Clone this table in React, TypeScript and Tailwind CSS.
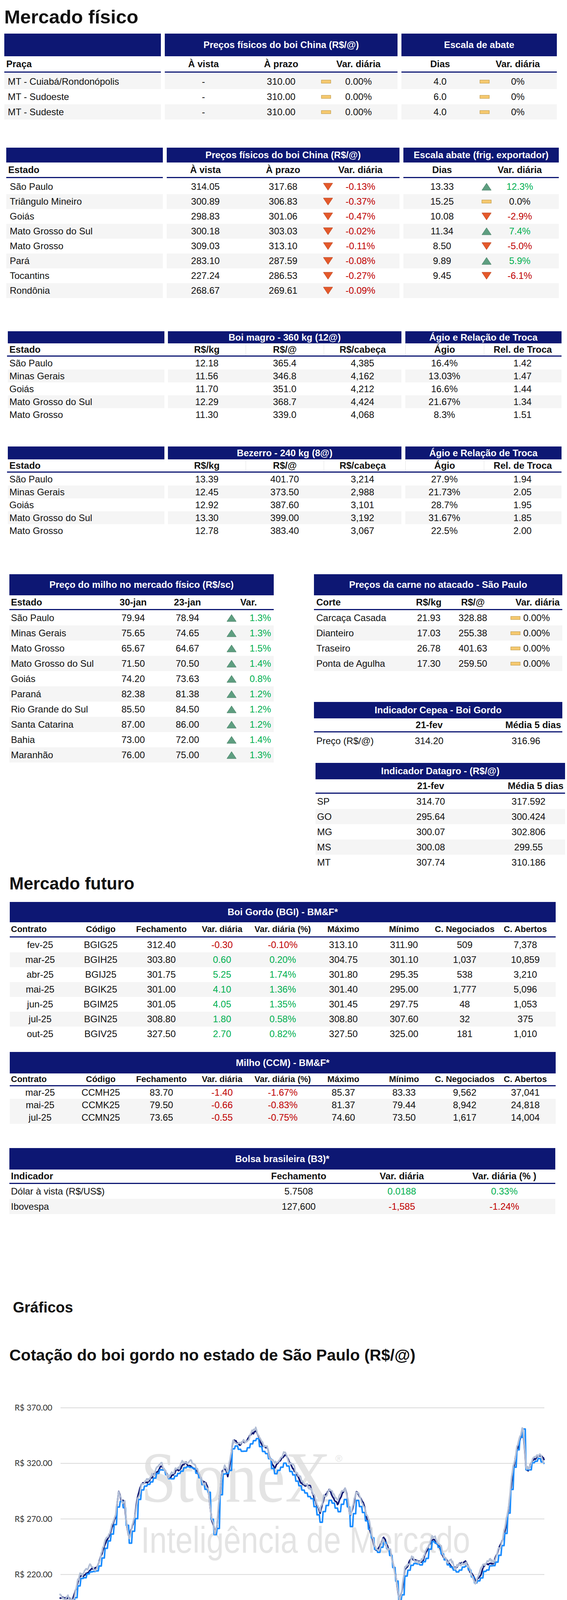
import React from "react";

type P = [number, number];
type Ic = "u" | "d" | "f" | "";

function mulberry32(a: number) {
  return function () {
    a |= 0;
    a = (a + 0x6d2b79f5) | 0;
    let t = Math.imul(a ^ (a >>> 15), 1 | a);
    t = (t + Math.imul(t ^ (t >>> 7), 61 | t)) ^ t;
    return ((t ^ (t >>> 14)) >>> 0) / 4294967296;
  };
}

function lerp(keys: P[], x: number) {
  if (x <= keys[0][0]) return keys[0][1];
  for (let i = 1; i < keys.length; i++) {
    if (x <= keys[i][0]) {
      const [x0, y0] = keys[i - 1];
      const [x1, y1] = keys[i];
      return y0 + ((y1 - y0) * (x - x0)) / (x1 - x0);
    }
  }
  return keys[keys.length - 1][1];
}

const pts = (a: P[]) => a.map(([x, y]) => `${x.toFixed(1)},${y.toFixed(1)}`).join(" ");

function smooth(p: P[]) {
  let d = `M${p[0][0]},${p[0][1]}`;
  for (let i = 0; i < p.length - 1; i++) {
    const p0 = p[i - 1] || p[i];
    const p1 = p[i];
    const p2 = p[i + 1];
    const p3 = p[i + 2] || p2;
    const c1x = p1[0] + (p2[0] - p0[0]) / 6;
    const c1y = p1[1] + (p2[1] - p0[1]) / 6;
    const c2x = p2[0] - (p3[0] - p1[0]) / 6;
    const c2y = p2[1] - (p3[1] - p1[1]) / 6;
    d += ` C${c1x},${c1y} ${c2x},${c2y} ${p2[0]},${p2[1]}`;
  }
  return d;
}

const MES = ["jan", "fev", "mar", "abr", "mai", "jun", "jul", "ago", "set", "out", "nov", "dez"];

function Icon({ k }: { k: Ic }) {
  if (k === "u")
    return (
      <svg width="26" height="20" viewBox="0 0 26 20">
        <polygon points="13,1 25,19 1,19" fill="#5e9e80" stroke="#467f65" strokeWidth="1" />
      </svg>
    );
  if (k === "d")
    return (
      <svg width="26" height="20" viewBox="0 0 26 20">
        <polygon points="1,1 25,1 13,19" fill="#e4592b" stroke="#b9431f" strokeWidth="1" />
      </svg>
    );
  if (k === "f")
    return (
      <svg width="26" height="10" viewBox="0 0 26 10">
        <rect x="1" y="1" width="24" height="8" fill="#f6c96f" stroke="#b8913c" strokeWidth="1" />
      </svg>
    );
  return null;
}

const tone = (k: Ic) => (k === "d" ? "text-[#c00000]" : k === "u" ? "text-[#00b050]" : "");
const sign = (v: string) => (v.startsWith("-") ? "text-[#c00000]" : "text-[#00b050]");

// ---------- tables ----------

function ChinaTable({
  first,
  right,
  rows,
  greyOdd,
  tall,
}: {
  first: string;
  right: string;
  rows: string[][];
  greyOdd: boolean;
  tall: boolean;
}) {
  const band = tall ? "h-[58px]" : "h-[38px]";
  const sub = tall ? "h-[42px]" : "h-[40px]";
  const rh = tall ? "h-[39px]" : "h-[38px]";
  const g = (i: number) => ((i % 2 === 1) === greyOdd ? "bg-[#f5f5f5]" : "");
  return (
    <div className="flex gap-[10px]">
      <div className="w-[401px]">
        <div className={`${band} bg-[#0d1773]`} />
        <div className={`${sub} flex items-center border-b-[3px] border-[#0d1773] pl-[5px] font-bold`}>{first}</div>
        <div className="pt-[3px]">
          {rows.map((r, i) => (
            <div key={i} className={`${rh} flex items-center pl-[9px] ${g(i)}`}>
              {r[0]}
            </div>
          ))}
        </div>
      </div>
      <div className="w-[596px]">
        <div className={`${band} flex items-center justify-center bg-[#0d1773] font-bold text-white`}>
          Preços físicos do boi China (R$/@)
        </div>
        <div className={`${sub} grid grid-cols-[198px_200px_30px_136px_1fr] items-center border-b-[3px] border-[#0d1773] text-center font-bold`}>
          <div>À vista</div>
          <div>À prazo</div>
          <div />
          <div>Var. diária</div>
        </div>
        <div className="pt-[3px]">
          {rows.map((r, i) => (
            <div key={i} className={`${rh} grid grid-cols-[198px_200px_30px_136px_1fr] items-center text-center ${g(i)}`}>
              <div>{r[1]}</div>
              <div>{r[2]}</div>
              <div className="flex justify-center">
                <Icon k={r[3] as Ic} />
              </div>
              <div className={tone(r[3] as Ic)}>{r[4]}</div>
            </div>
          ))}
        </div>
      </div>
      <div className="w-[398px]">
        <div className={`${band} flex items-center justify-center bg-[#0d1773] font-bold text-white`}>{right}</div>
        <div className={`${sub} grid grid-cols-[198px_30px_140px_1fr] items-center border-b-[3px] border-[#0d1773] text-center font-bold`}>
          <div>Dias</div>
          <div />
          <div>Var. diária</div>
        </div>
        <div className="pt-[3px]">
          {rows.map((r, i) => (
            <div key={i} className={`${rh} grid grid-cols-[198px_30px_140px_1fr] items-center text-center ${g(i)}`}>
              <div>{r[5]}</div>
              <div className="flex justify-center">
                <Icon k={r[6] as Ic} />
              </div>
              <div className={tone(r[6] as Ic)}>{r[7]}</div>
            </div>
          ))}
        </div>
      </div>
    </div>
  );
}

function MagroTable({ title, rows, tallBand }: { title: string; rows: string[][]; tallBand: boolean }) {
  const band = tallBand ? "h-[33px]" : "h-[31px]";
  return (
    <div className="w-[1420px]">
      <div className="flex">
        <div className={`${band} ml-[2px] w-[401px] bg-[#0d1773]`} />
        <div className={`${band} ml-[9px] flex w-[598px] items-center justify-center bg-[#0d1773] font-bold text-white`}>{title}</div>
        <div className={`${band} ml-[10px] flex w-[400px] items-center justify-center bg-[#0d1773] font-bold text-white`}>
          Ágio e Relação de Troca
        </div>
      </div>
      <div className="flex h-[34px] border-b-[3px] border-[#0d1773] font-bold">
        <div className="ml-[2px] flex w-[401px] items-center pl-[4px]">Estado</div>
        <div className="ml-[9px] grid w-[598px] grid-cols-3 text-center">
          <div className="flex items-center justify-center">R$/kg</div>
          <div className="flex items-center justify-center border-l border-[#e3e3e3]">R$/@</div>
          <div className="flex items-center justify-center border-l border-[#e3e3e3]">R$/cabeça</div>
        </div>
        <div className="ml-[10px] grid w-[400px] grid-cols-2 border-l border-[#e3e3e3] text-center">
          <div className="flex items-center justify-center">Ágio</div>
          <div className="flex items-center justify-center border-l border-[#e3e3e3]">Rel. de Troca</div>
        </div>
      </div>
      {rows.map((r, i) => {
        const g = i % 2 === 1 ? "bg-[#f5f5f5]" : "";
        return (
          <div key={i} className="flex h-[33px]">
            <div className={`ml-[2px] flex w-[401px] items-center pl-[4px] ${g}`}>{r[0]}</div>
            <div className={`ml-[9px] grid w-[598px] grid-cols-3 items-center text-center ${g}`}>
              <div>{r[1]}</div>
              <div>{r[2]}</div>
              <div>{r[3]}</div>
            </div>
            <div className={`ml-[10px] grid w-[400px] grid-cols-2 items-center text-center ${g}`}>
              <div>{r[4]}</div>
              <div>{r[5]}</div>
            </div>
          </div>
        );
      })}
    </div>
  );
}

const MILHO = [
  ["São Paulo", "79.94", "78.94", "1.3%"],
  ["Minas Gerais", "75.65", "74.65", "1.3%"],
  ["Mato Grosso", "65.67", "64.67", "1.5%"],
  ["Mato Grosso do Sul", "71.50", "70.50", "1.4%"],
  ["Goiás", "74.20", "73.63", "0.8%"],
  ["Paraná", "82.38", "81.38", "1.2%"],
  ["Rio Grande do Sul", "85.50", "84.50", "1.2%"],
  ["Santa Catarina", "87.00", "86.00", "1.2%"],
  ["Bahia", "73.00", "72.00", "1.4%"],
  ["Maranhão", "76.00", "75.00", "1.3%"],
];

const CARNE = [
  ["Carcaça Casada", "21.93", "328.88", "0.00%"],
  ["Dianteiro", "17.03", "255.38", "0.00%"],
  ["Traseiro", "26.78", "401.63", "0.00%"],
  ["Ponta de Agulha", "17.30", "259.50", "0.00%"],
];

const DATAGRO = [
  ["SP", "314.70", "317.592"],
  ["GO", "295.64", "300.424"],
  ["MG", "300.07", "302.806"],
  ["MS", "300.08", "299.55"],
  ["MT", "307.74", "310.186"],
];

const BGI = [
  ["fev-25", "BGIG25", "312.40", "-0.30", "-0.10%", "313.10", "311.90", "509", "7,378"],
  ["mar-25", "BGIH25", "303.80", "0.60", "0.20%", "304.75", "301.10", "1,037", "10,859"],
  ["abr-25", "BGIJ25", "301.75", "5.25", "1.74%", "301.80", "295.35", "538", "3,210"],
  ["mai-25", "BGIK25", "301.00", "4.10", "1.36%", "301.40", "295.00", "1,777", "5,096"],
  ["jun-25", "BGIM25", "301.05", "4.05", "1.35%", "301.45", "297.75", "48", "1,053"],
  ["jul-25", "BGIN25", "308.80", "1.80", "0.58%", "308.80", "307.60", "32", "375"],
  ["out-25", "BGIV25", "327.50", "2.70", "0.82%", "327.50", "325.00", "181", "1,010"],
];

const CCM = [
  ["mar-25", "CCMH25", "83.70", "-1.40", "-1.67%", "85.37", "83.33", "9,562", "37,041"],
  ["mai-25", "CCMK25", "79.50", "-0.66", "-0.83%", "81.37", "79.44", "8,942", "24,818"],
  ["jul-25", "CCMN25", "73.65", "-0.55", "-0.75%", "74.60", "73.50", "1,617", "14,004"],
];

const FUT_HEAD = ["Código", "Fechamento", "Var. diária", "Var. diária (%)", "Máximo", "Mínimo", "C. Negociados", "C. Abertos"];

function Futures({ title, rows, band, sub, rh, grey }: { title: string; rows: string[][]; band: string; sub: string; rh: string; grey: number[] }) {
  return (
    <div className="ml-[25px] w-[1398px]">
      <div className={`${band} flex items-center justify-center bg-[#0d1773] font-bold text-white`}>{title}</div>
      <div className={`${sub} grid grid-cols-9 items-center border-b-[3px] border-[#0d1773] text-[22px] font-bold`}>
        <div className="pl-[3px]">Contrato</div>
        {FUT_HEAD.map((h) => (
          <div key={h} className="whitespace-nowrap text-center">
            {h}
          </div>
        ))}
      </div>
      {rows.map((r, i) => (
        <div key={i} className={`${rh} grid grid-cols-9 items-center text-center ${grey.includes(i) ? "bg-[#f5f5f5]" : ""}`}>
          {r.map((c, j) => (
            <div key={j} className={j === 3 || j === 4 ? sign(c) : ""}>
              {c}
            </div>
          ))}
        </div>
      ))}
    </div>
  );
}

// ---------- charts ----------

function Watermark(props: { x: number; b1: number; w1: number; s1: number; b2: number; w2: number; s2: number; ry: number }) {
  const { x, b1, w1, s1, b2, w2, s2, ry } = props;
  return (
    <g fill="#dcdcdc" opacity="0.75">
      <text x={x} y={b1} fontFamily="'Liberation Serif', serif" fontSize={s1} textLength={w1} lengthAdjust="spacingAndGlyphs">
        StoneX
      </text>
      <text x={x + w1 + 12} y={ry} fontFamily="'Liberation Sans', sans-serif" fontSize={24}>
        ®
      </text>
      <text x={x} y={b2} fontFamily="'Liberation Sans', sans-serif" fontSize={s2} textLength={w2} lengthAdjust="spacingAndGlyphs">
        Inteligência de Mercado
      </text>
    </g>
  );
}

const C1: P[] = [
  [165, 199.5], [185, 198], [200, 196.5], [210, 205], [220, 217], [235, 220], [250, 224], [270, 227], [280, 236], [290, 246],
  [300, 253], [310, 261], [320, 272], [328, 294], [335, 285], [345, 283], [350, 265], [357, 252], [365, 262], [372, 270],
  [380, 288], [390, 299], [400, 302], [410, 304], [420, 307], [432, 313], [445, 317.6], [458, 312], [470, 307], [480, 311],
  [490, 314.7], [503, 317], [515, 320], [528, 318], [540, 314.7], [550, 309], [560, 303], [575, 298.6], [585, 270], [595, 256],
  [600, 262], [605, 282.6], [615, 313], [622, 316], [630, 309], [640, 330], [645, 342], [660, 336.5], [675, 338], [690, 344],
  [700, 346], [708, 349], [720, 339.5], [730, 336], [740, 333.6], [750, 322], [760, 316], [775, 322], [790, 327.8], [800, 321],
  [810, 316], [820, 310], [830, 304.5], [845, 300], [860, 295.7], [872, 285], [885, 275], [895, 288], [910, 295.7], [922, 290],
  [935, 282.6], [945, 292], [955, 298.6], [962, 288], [968, 271], [975, 280], [985, 295.7], [995, 290], [1005, 282.6], [1012, 275],
  [1020, 266.5], [1030, 255], [1040, 242], [1050, 245], [1060, 252], [1070, 246], [1080, 239], [1088, 228], [1095, 217], [1100, 205],
  [1105, 196.5], [1112, 205], [1120, 224], [1130, 230], [1140, 234.5], [1152, 232], [1165, 231.5], [1180, 240], [1195, 252], [1205, 250],
  [1215, 246], [1225, 238], [1235, 231.5], [1248, 228], [1260, 225.7], [1275, 229], [1290, 231.5], [1302, 222], [1315, 214.7], [1328, 220],
  [1340, 227], [1352, 229], [1365, 231.5], [1375, 237], [1385, 246], [1393, 255], [1400, 266.5], [1408, 285], [1415, 304.5], [1422, 320],
  [1430, 333.6], [1438, 344], [1446, 352.6], [1450, 340], [1455, 314.7], [1462, 316], [1475, 325], [1490, 326.4], [1505, 322],
];

// StoneX sits further under Cepea during 2022-2023
const STX_OFF: P[] = [[165, -3], [600, -3], [680, -6], [1000, -8], [1080, -3], [1505, -2]];

function Chart1() {
  const yv = (v: number) => 114 + (370 - v) * 2.845;
  const rand = mulberry32(7);
  const N = 640;
  const cep: P[] = [];
  const stx: P[] = [];
  const b3: P[] = [];
  let n1 = 0;
  let n2 = 0;
  let n3 = 0;
  let hold = 0;
  for (let i = 0; i <= N; i++) {
    const zx = 165 + ((1505 - 165) * i) / N;
    const base = lerp(C1, zx);
    n1 = n1 * 0.8 + (rand() - 0.5) * 2.4;
    n2 = n2 * 0.85 + (rand() - 0.5) * 1.6;
    n3 = n3 * 0.7 + (rand() - 0.5) * 4.2;
    const x = zx / 1.08;
    cep.push([x, yv(base + n1)]);
    if (i % 4 === 0) hold = base + lerp(STX_OFF, zx) + n2;
    stx.push([x, yv(hold)]);
    b3.push([x, yv(base + 1.2 + n3)]);
  }
  const labels = Array.from({ length: 30 }, (_, i) => {
    const k = 3 + 2 * i;
    return `${MES[k % 12]}-${20 + Math.floor(k / 12)}`;
  });
  return (
    <svg width="1452" height="820" className="block" fontFamily="Lato, sans-serif">
      {[370, 320, 270, 220, 170].map((v) => (
        <g key={v}>
          <line x1="155" x2="1394" y1={yv(v)} y2={yv(v)} stroke="#d9d9d9" strokeWidth="2" />
          <text x="134" y={yv(v) + 7} textAnchor="end" fontSize="21" fill="#333333">
            R$ {v}.00
          </text>
        </g>
      ))}
      <Watermark x={361} b1={354} w1={486} s1={185} b2={485} w2={843} s2={95} ry={252} />
      <polyline points={pts(cep)} fill="none" stroke="#0d1773" strokeWidth="4" strokeLinejoin="round" />
      <polyline points={pts(stx)} fill="none" stroke="#1a8cff" strokeWidth="4" strokeLinejoin="round" />
      <polyline points={pts(b3)} fill="none" stroke="#b3bfd6" strokeWidth="4" strokeLinejoin="round" />
      {labels.map((l, i) => {
        const x = 156 + i * 42.4;
        return (
          <g key={l + i}>
            <line x1={x - 2} x2={x - 2} y1="683" y2="693" stroke="#d9d9d9" strokeWidth="2" />
            <text transform={`translate(${x + 8},702) rotate(-90)`} textAnchor="end" fontSize="23" fill="#333333">
              {l}
            </text>
          </g>
        );
      })}
      <g fontSize="22.5" fill="#333333">
        <line x1="428" x2="468" y1="798" y2="798" stroke="#0d1773" strokeWidth="6" />
        <text x="474" y="806">Cepea (média 5 dias)</text>
        <line x1="706" x2="748" y1="798" y2="798" stroke="#1a8cff" strokeWidth="6" />
        <text x="752" y="806">StoneX</text>
        <line x1="852" x2="893" y1="798" y2="798" stroke="#b3bfd6" strokeWidth="6" />
        <text x="898" y="806">B3 contínuo</text>
      </g>
    </svg>
  );
}

function Chart2() {
  const yv = (v: number) => 373 + (310 - v) * 5.5;
  const cx = [370, 770, 1168];
  const s1: P[] = [[370, yv(311.8)], [770, yv(311.6)], [1168, yv(302.4)]];
  const s2: P[] = [[370, yv(312.4)], [770, yv(312.4)], [1168, yv(307.8)]];
  const s3: P[] = [[370, yv(321.3)], [770, yv(321.1)], [1168, yv(319.1)]];
  return (
    <svg width="1452" height="859" className="block" fontFamily="Lato, sans-serif">
      {[370, 350, 330, 310, 290, 270, 250].map((v) => (
        <g key={v}>
          <line x1="170" x2="1368" y1={yv(v)} y2={yv(v)} stroke="#d9d9d9" strokeWidth="2" />
          <text x="148" y={yv(v) + 8} textAnchor="end" fontSize="22" fill="#333333">
            R$ {v}.00
          </text>
        </g>
      ))}
      {[170, 570, 968, 1368].map((x) => (
        <line key={x} x1={x} x2={x} y1={yv(250)} y2={yv(250) + 12} stroke="#d9d9d9" strokeWidth="2" />
      ))}
      {["Feb-25", "Mar-25", "Apr-25"].map((l, i) => (
        <text key={l} x={cx[i]} y="748" textAnchor="middle" fontSize="23" fill="#333333">
          {l}
        </text>
      ))}
      <Watermark x={368} b1={373} w1={475} s1={185} b2={502} w2={812} s2={95} ry={276} />
      <path d={smooth(s3)} fill="none" stroke="#b3bed3" strokeWidth="6" strokeDasharray="12 7" strokeLinecap="round" />
      <path d={smooth(s2)} fill="none" stroke="#1a8cff" strokeWidth="6" strokeDasharray="12 7" strokeLinecap="round" />
      <path d={smooth(s1)} fill="none" stroke="#0f1c6b" strokeWidth="9" />
      {s1.map(([x, y]) => (
        <circle key={x} cx={x} cy={y} r="9" fill="#0f1c6b" />
      ))}
      <g fontSize="23" fill="#333333">
        <line x1="491" x2="553" y1="819" y2="819" stroke="#0f1c6b" strokeWidth="9" />
        <circle cx="520" cy="819" r="9" fill="#0f1c6b" />
        <text x="556" y="827">24-fev</text>
        <line x1="645" x2="704" y1="819" y2="819" stroke="#1a8cff" strokeWidth="6" strokeDasharray="10 6" />
        <text x="708" y="827">17-fev</text>
        <line x1="798" x2="856" y1="819" y2="819" stroke="#b3bed3" strokeWidth="6" strokeDasharray="10 6" />
        <text x="861" y="827">24-jan</text>
      </g>
    </svg>
  );
}

const L3: P[] = [
  [115, 860], [120, 910], [130, 820], [140, 810], [150, 890], [158, 850], [165, 900], [175, 950], [185, 1050], [195, 1180], [205, 1190],
  [215, 1230], [230, 1240], [245, 1290], [255, 1180], [265, 1230], [275, 1070], [285, 840], [295, 880], [305, 710], [320, 750], [330, 690],
  [345, 800], [360, 790], [372, 840], [385, 635], [400, 900], [410, 1090], [418, 940], [430, 1100], [440, 1160], [450, 1040], [460, 880],
  [470, 960], [480, 800], [490, 760], [500, 840], [510, 890], [520, 600], [530, 490], [538, 460], [545, 600], [555, 680], [565, 880],
  [575, 1000], [590, 1130], [598, 1205], [610, 1110], [625, 1090], [635, 960], [645, 740], [655, 830], [665, 760], [675, 880], [685, 1040],
  [695, 920], [710, 960], [720, 820], [730, 850], [740, 770], [750, 690], [760, 870], [775, 930], [790, 920], [805, 980], [820, 1020],
  [835, 930], [850, 950], [865, 920], [880, 990], [895, 860], [910, 830], [925, 860], [940, 960], [955, 930], [965, 1000], [975, 830],
  [985, 800], [995, 700], [1005, 600], [1012, 540], [1018, 265], [1025, 290], [1035, 430], [1045, 560], [1055, 670], [1065, 640],
  [1075, 700], [1085, 850], [1095, 950], [1105, 1030], [1120, 1010], [1135, 1050], [1145, 1000], [1155, 940], [1170, 1050], [1185, 1010],
  [1195, 1070], [1205, 1020], [1215, 1110], [1230, 1130], [1245, 1140], [1258, 1180], [1268, 1260], [1280, 1280], [1290, 1310],
  [1300, 1330], [1310, 1270], [1320, 1290], [1330, 1220], [1340, 1220], [1350, 1180], [1360, 1140], [1368, 810], [1378, 930],
  [1390, 820], [1400, 790], [1408, 900], [1415, 1100], [1425, 1190], [1440, 1160], [1450, 1190], [1460, 1090], [1470, 1020],
  [1478, 990], [1485, 1020], [1500, 1015],
];

const D3: P[] = [
  [115, 960], [120, 1070], [125, 1080], [132, 1020], [140, 1040], [148, 1080], [155, 1050], [165, 1080], [175, 1100], [185, 1140],
  [195, 1210], [210, 1250], [225, 1265], [235, 1310], [245, 1330], [255, 1265], [265, 1310], [272, 1220], [280, 1050], [290, 1020],
  [300, 940], [310, 950], [320, 920], [330, 920], [345, 970], [360, 990], [375, 960], [385, 890], [395, 1010], [405, 1050], [415, 1110],
  [425, 1170], [440, 1210], [450, 1060], [460, 1030], [470, 1000], [480, 970], [490, 1010], [500, 980], [510, 1040], [520, 820],
  [528, 765], [538, 770], [545, 830], [555, 930], [568, 1100], [580, 1210], [592, 1260], [605, 1190], [620, 1170], [632, 1050],
  [642, 960], [652, 1010], [662, 1070], [672, 1000], [682, 1100], [694, 920], [704, 1040], [715, 1050], [725, 890], [735, 910],
  [745, 800], [755, 900], [765, 960], [775, 990], [785, 1020], [792, 880], [800, 990], [810, 1040], [820, 940], [835, 930], [845, 880],
  [855, 790], [865, 890], [875, 940], [885, 910], [895, 950], [905, 850], [915, 960], [925, 1000], [935, 1100], [945, 1000], [958, 1050],
  [968, 870], [978, 880], [988, 820], [1000, 850], [1010, 800], [1018, 640], [1028, 605], [1038, 700], [1048, 760], [1058, 850],
  [1068, 800], [1078, 790], [1085, 900], [1095, 980], [1105, 1020], [1115, 910], [1125, 950], [1140, 990], [1155, 1050], [1168, 980],
  [1178, 950], [1190, 1100], [1200, 1160], [1215, 1180], [1228, 1220], [1245, 1210], [1258, 1240], [1270, 1310], [1282, 1380],
  [1292, 1400], [1302, 1410], [1312, 1350], [1325, 1345], [1340, 1360], [1350, 1270], [1362, 1200], [1372, 1180], [1380, 1090],
  [1390, 970], [1400, 990], [1410, 1150], [1420, 1240], [1435, 1270], [1450, 1280], [1460, 1230], [1470, 1200], [1500, 1197],
];

function Chart3() {
  const yv = (v: number) => 45 + (16 - v) * 54.2;
  const rand = mulberry32(11);
  const mk = (keys: P[], amp: number) => {
    const out: P[] = [];
    for (let zx = 115; zx <= 1500; zx += 3) {
      const zy = lerp(keys, zx);
      const j = zx > 1470 ? 0 : (rand() - 0.5) * amp;
      out.push([zx / 1.08, zy / 2.01 - 37 + j]);
    }
    return out;
  };
  const light = mk(L3, 7);
  const dark = mk(D3, 6);
  const ticks = [105, 156, 204, 253, 303, 354, 403, 454, 505, 556, 606, 657, 708, 759, 810, 861, 907, 958, 1009, 1060, 1111, 1160, 1211, 1261, 1310, 1361];
  return (
    <svg width="1452" height="843" className="block" fontFamily="Lato, sans-serif">
      {[16, 14, 12, 10, 8, 6, 4].map((v) => (
        <g key={v}>
          <line x1="105" x2="1389" y1={yv(v)} y2={yv(v)} stroke="#d9d9d9" strokeWidth="2" />
          <text x="81" y={yv(v) + 8} textAnchor="end" fontSize="23" fill="#333333">
            {v.toFixed(2)}
          </text>
        </g>
      ))}
      <Watermark x={315} b1={371} w1={509} s1={185} b2={499} w2={870} s2={95} ry={270} />
      <polyline points={pts(light)} fill="none" stroke="#00b0f0" strokeWidth="5" strokeLinejoin="round" />
      <polyline points={pts(dark)} fill="none" stroke="#0b2163" strokeWidth="5" strokeLinejoin="round" />
      <line x1="105" x2="1389" y1="460" y2="460" stroke="#262626" strokeWidth="5" strokeDasharray="11 6" />
      {ticks.map((x, i) => (
        <g key={x}>
          <line x1={x} x2={x} y1="695" y2="705" stroke="#d9d9d9" strokeWidth="2" />
          <text transform={`translate(${x + 8},712) rotate(-45)`} textAnchor="end" fontSize="21" fill="#333333">
            {`${MES[i % 12]}-${23 + Math.floor(i / 12)}`}
          </text>
        </g>
      ))}
      <g fontSize="22" fill="#333333" letterSpacing="1">
        <line x1="165" x2="222" y1="814" y2="814" stroke="#00b0f0" strokeWidth="6" />
        <text x="229" y="822">Frigoríficos, exportadores</text>
        <line x1="645" x2="704" y1="814" y2="814" stroke="#0b2163" strokeWidth="6" />
        <text x="709" y="822">Frigoríficos, mercado interno</text>
        <line x1="1156" x2="1208" y1="814" y2="814" stroke="#262626" strokeWidth="5" strokeDasharray="11 6" />
        <text x="1222" y="822">Média</text>
      </g>
    </svg>
  );
}

const BG4: P[] = [
  [126, 1165], [150, 1165], [155, 1175], [165, 1175], [195, 1180], [220, 1188], [260, 1195], [300, 1200], [310, 1215], [330, 1225],
  [350, 1228], [370, 1258], [400, 1250], [420, 1240], [440, 1235], [455, 1215], [500, 1215], [520, 1225], [540, 1250], [560, 1270],
  [570, 1285], [598, 1290], [600, 1310], [650, 1305], [665, 1290], [690, 1285], [720, 1275], [735, 1255], [770, 1250], [800, 1235],
  [820, 1215], [840, 1190], [860, 1170], [880, 1125], [900, 1090], [920, 1060], [940, 1040], [960, 980], [970, 920], [990, 810],
  [1010, 760], [1030, 750], [1040, 720], [1060, 680], [1080, 600], [1100, 560], [1115, 515], [1130, 500], [1150, 478], [1155, 480],
  [1165, 580], [1175, 595], [1180, 690], [1200, 700], [1210, 680], [1230, 670], [1260, 660], [1275, 625], [1290, 620], [1305, 600],
  [1340, 605], [1360, 600], [1375, 640], [1385, 640], [1395, 650],
];

const CC4: P[] = [
  [126, 1195], [130, 1140], [150, 1140], [170, 1135], [178, 1160], [190, 1178], [215, 1178], [220, 1165], [260, 1165], [270, 1155],
  [280, 1160], [285, 1200], [300, 1238], [310, 1220], [320, 1195], [330, 1175], [345, 1160], [355, 1180], [370, 1210], [385, 1210],
  [400, 1190], [415, 1165], [430, 1200], [450, 1205], [470, 1195], [485, 1205], [500, 1180], [520, 1175], [545, 1175], [555, 1235],
  [570, 1255], [595, 1245], [620, 1255], [650, 1255], [670, 1245], [695, 1235], [712, 1200], [740, 1205], [760, 1215], [780, 1225],
  [790, 1225], [795, 1175], [815, 1163], [860, 1160], [880, 1135], [900, 1070], [930, 1065], [945, 1025], [965, 1020], [975, 960],
  [985, 900], [992, 860], [1000, 775], [1008, 700], [1025, 730], [1050, 730], [1060, 720], [1070, 700], [1090, 700], [1095, 660],
  [1110, 660], [1115, 515], [1130, 515], [1140, 510], [1150, 500], [1155, 485], [1170, 500], [1180, 570], [1190, 575], [1200, 625],
  [1235, 625], [1250, 590], [1285, 590], [1290, 555], [1305, 555], [1315, 570], [1325, 570], [1330, 605], [1365, 605], [1372, 588],
  [1392, 588], [1395, 595],
];

const MG4: P[] = [
  [126, 950], [128, 875], [131, 810], [150, 815], [152, 772], [158, 790], [170, 780], [175, 770], [178, 820], [188, 820], [195, 870],
  [215, 875], [218, 825], [222, 810], [240, 810], [260, 800], [263, 775], [272, 775], [280, 875], [290, 935], [298, 965], [305, 945],
  [310, 875], [320, 820], [330, 740], [345, 700], [355, 700], [370, 730], [385, 750], [400, 725], [410, 690], [417, 670], [425, 760],
  [440, 780], [450, 800], [458, 855], [470, 830], [480, 822], [485, 850], [500, 840], [505, 790], [520, 740], [540, 685], [545, 685],
  [555, 825], [570, 800], [600, 795], [602, 705], [625, 705], [640, 745], [660, 755], [675, 770], [690, 760], [700, 780], [710, 720],
  [715, 685], [740, 690], [755, 735], [775, 815], [790, 815], [800, 720], [815, 700], [830, 720], [840, 770], [850, 805], [860, 830],
  [870, 835], [880, 775], [882, 880], [900, 885], [903, 740], [908, 830], [920, 830], [928, 900], [935, 900], [945, 820], [948, 873],
  [960, 880], [975, 960], [985, 1080], [990, 860], [1000, 770], [1010, 630], [1020, 780], [1030, 800], [1040, 860], [1045, 900],
  [1055, 960], [1060, 990], [1070, 990], [1080, 1130], [1090, 1165], [1100, 1130], [1113, 1160], [1115, 880], [1125, 920], [1135, 930],
  [1145, 945], [1155, 870], [1162, 700], [1168, 625], [1178, 740], [1190, 680], [1205, 700], [1215, 745], [1240, 770], [1250, 690],
  [1265, 675], [1275, 770], [1285, 770], [1290, 695], [1300, 740], [1310, 805], [1325, 805], [1330, 900], [1340, 870], [1350, 870],
  [1360, 890], [1370, 825], [1378, 730], [1385, 735], [1395, 730],
];

function Chart4() {
  const cv = (a: P[]): P[] => a.map(([zx, zy]) => [zx / 1.08, zy / 1.406 - 237]);
  const yl = (v: number) => 45 + (24 - v) * 67.7;
  const yr = (m: number) => 45 + (2 - m) * 169.25;
  const area = cv(MG4);
  const zero = yr(0);
  const areaPts: P[] = [[area[0][0], zero], ...area, [area[area.length - 1][0], zero]];
  const ticks = [117, 205, 288, 376, 460, 549, 633, 722, 810, 895, 983, 1069, 1157, 1243];
  const right = ["R$ 2.00", "R$ 1.50", "R$ 1.00", "R$ 0.50", "R$ 0.00", "-R$ 0.50", "-R$ 1.00", "-R$ 1.50", "-R$ 2.00"];
  return (
    <svg width="1452" height="870" className="block" fontFamily="Lato, sans-serif">
      {[24, 23, 22, 21, 20, 19, 18, 17, 16, 15, 14].map((v) => (
        <g key={v}>
          <line x1="117" x2="1293" y1={yl(v)} y2={yl(v)} stroke="#e0e0e0" strokeWidth="2" />
          <text x="11" y={yl(v) + 8} fontSize="21" fill="#333333">
            R$ {v}.00
          </text>
        </g>
      ))}
      {right.map((l, i) => (
        <text key={l} x="1316" y={yr(2 - i * 0.5) + 8} fontSize="21" fill="#333333">
          {l}
        </text>
      ))}
      <polygon points={pts(areaPts)} fill="#b4bfd4" />
      <Watermark x={305} b1={353} w1={482} s1={160} b2={499} w2={801} s2={84} ry={278} />
      <polyline points={pts(cv(BG4))} fill="none" stroke="#1f8ff3" strokeWidth="5" strokeLinejoin="round" />
      <polyline points={pts(cv(CC4))} fill="none" stroke="#0d1a6e" strokeWidth="5" strokeLinejoin="round" />
      {ticks.map((x, i) => (
        <g key={x}>
          <line x1={x} x2={x} y1="722" y2="732" stroke="#d9d9d9" strokeWidth="2" />
          <text transform={`translate(${x + 9},748) rotate(-45)`} textAnchor="end" fontSize="22" fill="#333333">
            {`${MES[i % 12]}-${24 + Math.floor(i / 12)}`}
          </text>
        </g>
      ))}
      <g fontSize="22" fill="#333333">
        <rect x="310" y="835" width="37" height="18" fill="#b4bfd4" />
        <text x="352" y="852">Margem da Indústria (eixo direito)</text>
        <line x1="727" x2="768" y1="844" y2="844" stroke="#1f8ff3" strokeWidth="6" />
        <text x="771" y="852">Boi Gordo</text>
        <line x1="907" x2="952" y1="844" y2="844" stroke="#0d1a6e" strokeWidth="6" />
        <text x="954" y="852">Carcaça Casada</text>
      </g>
    </svg>
  );
}

// ---------- page ----------

export default function App() {
  return (
    <div className="w-[1452px] bg-white font-['Liberation_Sans',Arial,sans-serif] text-[24px] leading-none whitespace-nowrap text-[#111]">
      <h1 className="pt-[19px] pl-[11px] text-[49px] leading-none font-bold">Mercado físico</h1>

      <div className="mt-[18px] ml-[11px]">
        <ChinaTable
          first="Praça"
          right="Escala de abate"
          greyOdd={false}
          tall={true}
          rows={[
            ["MT - Cuiabá/Rondonópolis", "-", "310.00", "f", "0.00%", "4.0", "f", "0%"],
            ["MT - Sudoeste", "-", "310.00", "f", "0.00%", "6.0", "f", "0%"],
            ["MT - Sudeste", "-", "310.00", "f", "0.00%", "4.0", "f", "0%"],
          ]}
        />
      </div>

      <div className="mt-[72px] ml-[16px]">
        <ChinaTable
          first="Estado"
          right="Escala abate (frig. exportador)"
          greyOdd={true}
          tall={false}
          rows={[
            ["São Paulo", "314.05", "317.68", "d", "-0.13%", "13.33", "u", "12.3%"],
            ["Triângulo Mineiro", "300.89", "306.83", "d", "-0.37%", "15.25", "f", "0.0%"],
            ["Goiás", "298.83", "301.06", "d", "-0.47%", "10.08", "d", "-2.9%"],
            ["Mato Grosso do Sul", "300.18", "303.03", "d", "-0.02%", "11.34", "u", "7.4%"],
            ["Mato Grosso", "309.03", "313.10", "d", "-0.11%", "8.50", "d", "-5.0%"],
            ["Pará", "283.10", "287.59", "d", "-0.08%", "9.89", "u", "5.9%"],
            ["Tocantins", "227.24", "286.53", "d", "-0.27%", "9.45", "d", "-6.1%"],
            ["Rondônia", "268.67", "269.61", "d", "-0.09%", "", "", ""],
          ]}
        />
      </div>

      <div className="mt-[85px] ml-[18px]">
        <MagroTable
          title="Boi magro - 360 kg (12@)"
          tallBand={false}
          rows={[
            ["São Paulo", "12.18", "365.4", "4,385", "16.4%", "1.42"],
            ["Minas Gerais", "11.56", "346.8", "4,162", "13.03%", "1.47"],
            ["Goiás", "11.70", "351.0", "4,212", "16.6%", "1.44"],
            ["Mato Grosso do Sul", "12.29", "368.7", "4,424", "21.67%", "1.34"],
            ["Mato Grosso", "11.30", "339.0", "4,068", "8.3%", "1.51"],
          ]}
        />
      </div>

      <div className="mt-[65px] ml-[18px]">
        <MagroTable
          title="Bezerro - 240 kg (8@)"
          tallBand={true}
          rows={[
            ["São Paulo", "13.39", "401.70", "3,214", "27.9%", "1.94"],
            ["Minas Gerais", "12.45", "373.50", "2,988", "21.73%", "2.05"],
            ["Goiás", "12.92", "387.60", "3,101", "28.7%", "1.95"],
            ["Mato Grosso do Sul", "13.30", "399.00", "3,192", "31.67%", "1.85"],
            ["Mato Grosso", "12.78", "383.40", "3,067", "22.5%", "2.00"],
          ]}
        />
      </div>

      <div className="mt-[95px] ml-[24px] flex items-start">
        <div className="w-[677px]">
          <div className="flex h-[54px] items-center justify-center bg-[#0d1773] font-bold text-white">
            Preço do milho no mercado físico (R$/sc)
          </div>
          <div className="grid h-[38px] grid-cols-[270px_94px_184px_129px] items-center border-b-[3px] border-[#0d1773] font-bold">
            <div className="pl-[4px]">Estado</div>
            <div className="text-center">30-jan</div>
            <div className="text-center">23-jan</div>
            <div className="text-center">Var.</div>
          </div>
          {MILHO.map((r, i) => (
            <div key={r[0]} className={`grid h-[39px] grid-cols-[270px_94px_184px_42px_87px] items-center ${i % 2 === 1 ? "bg-[#f5f5f5]" : ""}`}>
              <div className="pl-[4px]">{r[0]}</div>
              <div className="text-center">{r[1]}</div>
              <div className="text-center">{r[2]}</div>
              <div className="flex justify-center">
                <Icon k="u" />
              </div>
              <div className="pr-[7px] text-right text-[#00b050]">{r[3]}</div>
            </div>
          ))}
        </div>

        <div className="ml-[103px] w-[636px]">
          <div className="flex h-[54px] items-center justify-center bg-[#0d1773] font-bold text-white">
            Preços da carne no atacado - São Paulo
          </div>
          <div className="grid h-[38px] grid-cols-[240px_108px_118px_36px_1fr] items-center border-b-[3px] border-[#0d1773] font-bold">
            <div className="pl-[6px]">Corte</div>
            <div className="text-center">R$/kg</div>
            <div className="text-center">R$/@</div>
            <div />
            <div className="pl-[14px]">Var. diária</div>
          </div>
          {CARNE.map((r, i) => (
            <div key={r[0]} className={`grid h-[39px] grid-cols-[240px_108px_118px_36px_28px_1fr] items-center ${i % 2 === 1 ? "bg-[#f5f5f5]" : ""}`}>
              <div className="pl-[6px]">{r[0]}</div>
              <div className="text-center">{r[1]}</div>
              <div className="text-center">{r[2]}</div>
              <div />
              <div className="flex justify-center">
                <Icon k="f" />
              </div>
              <div className="pl-[6px]">{r[3]}</div>
            </div>
          ))}

          <div className="mt-[79px] flex h-[42px] items-center justify-center bg-[#0d1773] font-bold text-white">
            Indicador Cepea - Boi Gordo
          </div>
          <div className="grid h-[36px] grid-cols-[240px_110px_140px_1fr] items-center border-b-[3px] border-[#0d1773] font-bold">
            <div />
            <div className="text-center">21-fev</div>
            <div />
            <div className="pr-[4px] text-right">Média 5 dias</div>
          </div>
          <div className="grid h-[44px] grid-cols-[240px_110px_140px_1fr] items-center">
            <div className="pl-[6px]">Preço (R$/@)</div>
            <div className="text-center">314.20</div>
            <div />
            <div className="pr-[40px] text-center">316.96</div>
          </div>

          <div className="mt-[34px] ml-[4px] w-[639px]">
            <div className="flex h-[42px] items-center justify-center bg-[#0d1773] font-bold text-white">
              Indicador Datagro - (R$/@)
            </div>
            <div className="grid h-[37px] grid-cols-[240px_110px_140px_1fr] items-center border-b-[3px] border-[#0d1773] font-bold">
              <div />
              <div className="text-center">21-fev</div>
              <div />
              <div className="pr-[4px] text-right">Média 5 dias</div>
            </div>
            {DATAGRO.map((r, i) => (
              <div key={r[0]} className={`grid h-[39px] grid-cols-[240px_110px_140px_1fr] items-center ${i % 2 === 1 ? "bg-[#f5f5f5]" : ""}`}>
                <div className="pl-[4px]">{r[0]}</div>
                <div className="text-center">{r[1]}</div>
                <div />
                <div className="pr-[38px] text-center">{r[2]}</div>
              </div>
            ))}
          </div>
        </div>
      </div>

      <h1 className="mt-[13px] pl-[24px] text-[44px] leading-none font-bold">Mercado futuro</h1>

      <div className="mt-[25px]">
        <Futures title="Boi Gordo (BGI) - BM&F*" rows={BGI} band="h-[52px]" sub="h-[39px]" rh="h-[38px]" grey={[1, 3, 5]} />
      </div>
      <div className="mt-[27px]">
        <Futures title="Milho (CCM) - BM&F*" rows={CCM} band="h-[55px]" sub="h-[33px]" rh="h-[32px]" grey={[1, 2]} />
      </div>

      <div className="mt-[62px] ml-[24px] w-[1398px]">
        <div className="flex h-[55px] items-center justify-center bg-[#0d1773] font-bold text-white">Bolsa brasileira (B3)*</div>
        <div className="grid h-[37px] grid-cols-[609px_264px_264px_1fr] items-center border-b-[3px] border-[#0d1773] font-bold">
          <div className="pl-[4px]">Indicador</div>
          <div className="text-center">Fechamento</div>
          <div className="text-center">Var. diária</div>
          <div className="text-center">Var. diária (% )</div>
        </div>
        <div className="grid h-[38px] grid-cols-[609px_264px_264px_1fr] items-center">
          <div className="pl-[4px]">Dólar à vista (R$/US$)</div>
          <div className="text-center">5.7508</div>
          <div className="text-center text-[#00b050]">0.0188</div>
          <div className="text-center text-[#00b050]">0.33%</div>
        </div>
        <div className="grid h-[39px] grid-cols-[609px_264px_264px_1fr] items-center bg-[#f5f5f5]">
          <div className="pl-[4px]">Ibovespa</div>
          <div className="text-center">127,600</div>
          <div className="text-center text-[#c00000]">-1,585</div>
          <div className="text-center text-[#c00000]">-1.24%</div>
        </div>
      </div>

      <h2 className="mt-[220px] pl-[33px] text-[38px] leading-none font-bold">Gráficos</h2>

      <h2 className="mt-[83px] pl-[24px] text-[41px] leading-none font-bold">Cotação do boi gordo no estado de São Paulo (R$/@)</h2>
      <Chart1 />

      <h2 className="mt-[80px] pl-[24px] text-[41px] leading-none font-bold">
        Cotação dos contratos futuros de boi gordo negociados na B3 (R$/@)
      </h2>
      <Chart2 />

      <h2 className="mt-[86px] pl-[24px] text-[41px] leading-none font-bold">Média nacional das escalas de abate (dias)</h2>
      <Chart3 />

      <h2 className="mt-[96px] pl-[7px] text-[41px] leading-none font-bold">
        Margem indústria paulista: boi gordo (R$/kg) x carne atacado (R$/kg)
      </h2>
      <Chart4 />
    </div>
  );
}
